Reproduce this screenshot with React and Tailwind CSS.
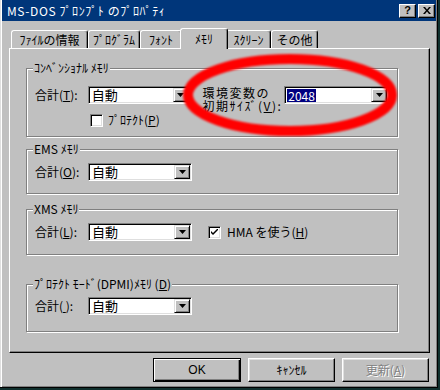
import React from 'react';

function Ul({ children }) {
  return <span className="underline underline-offset-[1px]">{children}</span>;
}

function Arrow() {
  return (
    <svg width="7" height="4" viewBox="0 0 7 4">
      <polygon points="0,0 7,0 3.5,4" fill="#000" />
    </svg>
  );
}

function Combo({ value, selected, w }) {
  return (
    <div className={`${w} h-[18px] flex items-center bg-white border border-t-[#808080] border-l-[#808080] border-r-white border-b-white shadow-[inset_1px_1px_0_#000,inset_-1px_-1px_0_#dfdfdf] pl-[2px] pr-[1px]`}>
      <div className="flex-1 flex items-center">
        {selected ? (
          <span className="bg-[#000080] text-white px-[1px] leading-[13px]">{value}</span>
        ) : (
          <span className="pl-[1px] text-[13px] leading-[14px]">{value}</span>
        )}
      </div>
      <div className="w-[16px] h-[14px] bg-[#c0c0c0] flex items-center justify-center border border-t-[#dfdfdf] border-l-[#dfdfdf] border-r-black border-b-black shadow-[inset_1px_1px_0_#fff,inset_-1px_-1px_0_#808080]">
        <Arrow />
      </div>
    </div>
  );
}

function Check({ checked }) {
  return (
    <div className="w-[13px] h-[13px] bg-white border border-t-[#808080] border-l-[#808080] border-r-white border-b-white shadow-[inset_1px_1px_0_#000,inset_-1px_-1px_0_#dfdfdf] flex items-center justify-center">
      {checked && (
        <svg width="7" height="7" viewBox="0 0 7 7">
          <path d="M0 2 L0 4 L2 6 L7 1 L7 -1 L2 4 Z" fill="#000" />
        </svg>
      )}
    </div>
  );
}

function Group({ label, h, mt, children }) {
  return (
    <div className={`w-[372px] ${h} ${mt} flex flex-col border border-[#808080] shadow-[inset_1px_1px_0_#fff,1px_1px_0_#fff] px-[8px]`}>
      <span className="self-start -mt-[8px] -ml-[2px] px-[1px] bg-[#c0c0c0] leading-[14px]">{label}</span>
      {children}
    </div>
  );
}

function Tab({ w, children }) {
  return (
    <div className={`${w} h-[18px] flex items-center justify-center bg-[#c0c0c0] border-t border-l border-r border-t-white border-l-white border-r-black rounded-t-[3px] shadow-[inset_-1px_0_0_#808080]`}>
      {children}
    </div>
  );
}

export default function App() {
  return (
    <div className="relative w-[440px] h-[390px] bg-[#10302e] overflow-hidden text-black text-[12px] leading-[14px] font-['Noto_Sans_CJK_JP',sans-serif]">
      <div className="w-[438px] h-[388px] bg-[#c0c0c0] flex flex-col border-r border-b border-black shadow-[inset_1px_0_0_#dfdfdf,inset_2px_0_0_#fff,inset_-1px_-1px_0_#808080]">
        {/* title bar */}
        <div className="ml-[2px] mr-[1px] h-[21px] bg-[#00367a] flex items-center pl-[5px] pr-[1px]">
          <span className="flex-1 text-white text-[12px] tracking-[0.6px]">MS-DOS ﾌﾟﾛﾝﾌﾟﾄ のﾌﾟﾛﾊﾟﾃｨ</span>
          <div className="flex gap-[2px]">
            <div className="w-[17px] h-[14px] bg-[#c0c0c0] flex items-center justify-center border border-t-white border-l-white border-r-black border-b-black shadow-[inset_-1px_-1px_0_#808080] font-['Liberation_Sans',sans-serif] font-bold text-[11px] leading-[11px]">?</div>
            <div className="w-[17px] h-[14px] bg-[#c0c0c0] flex items-center justify-center border border-t-white border-l-white border-r-black border-b-black shadow-[inset_-1px_-1px_0_#808080]">
              <svg width="8" height="7" viewBox="0 0 8 7">
                <path d="M0 0 L2 0 L4 2.5 L6 0 L8 0 L5 3.5 L8 7 L6 7 L4 4.5 L2 7 L0 7 L3 3.5 Z" fill="#000" />
              </svg>
            </div>
          </div>
        </div>

        {/* tabs */}
        <div className="mt-[7px] ml-[11px] h-[20px] flex items-end">
          <Tab w="w-[77px]">ﾌｧｲﾙの情報</Tab>
          <Tab w="w-[52px]">ﾌﾟﾛｸﾞﾗﾑ</Tab>
          <Tab w="w-[42px]">ﾌｫﾝﾄ</Tab>
          <div className="relative z-10 w-[48px] -mx-[2px] h-[21px] -mb-[1px] flex items-start justify-center pt-[3px] bg-[#c0c0c0] border-t border-l border-r border-t-white border-l-white border-r-black rounded-t-[3px] shadow-[inset_-1px_0_0_#808080]">
            ﾒﾓﾘ
          </div>
          <Tab w="w-[45px]">ｽｸﾘｰﾝ</Tab>
          <Tab w="w-[47px]">その他</Tab>
        </div>

        {/* panel */}
        <div className="ml-[9px] w-[421px] h-[305px] flex flex-col pl-[16px] border border-t-white border-l-white border-r-black border-b-black shadow-[inset_-1px_-1px_0_#808080]">
          <Group label="ｺﾝﾍﾞﾝｼｮﾅﾙ ﾒﾓﾘ" h="h-[69px]" mt="mt-[19px]">
            <div className="mt-[11px] flex items-start">
              <span className="w-[53px] mt-[2px]">合計(<Ul>T</Ul>):</span>
              <Combo value="自動" w="w-[103px]" />
              <span className="ml-[12px] w-[82px] leading-[13px] tracking-[1.5px]">
                環境変数の
                <br />
                初期ｻｲｽﾞ(<Ul>V</Ul>):
              </span>
              <Combo value="2048" selected w="w-[105px]" />
            </div>
            <div className="mt-[1px] ml-[55px] flex items-center gap-[5px]">
              <Check />
              <span>ﾌﾟﾛﾃｸﾄ(<Ul>P</Ul>)</span>
            </div>
          </Group>

          <Group label="EMS ﾒﾓﾘ" h="h-[45px]" mt="mt-[12px]">
            <div className="mt-[7px] flex items-center">
              <span className="w-[53px]">合計(<Ul>O</Ul>):</span>
              <Combo value="自動" w="w-[104px]" />
            </div>
          </Group>

          <Group label="XMS ﾒﾓﾘ" h="h-[46px]" mt="mt-[15px]">
            <div className="mt-[7px] flex items-center">
              <span className="w-[53px]">合計(<Ul>L</Ul>):</span>
              <Combo value="自動" w="w-[104px]" />
              <div className="ml-[16px] flex items-center gap-[6px]">
                <Check checked />
                <span>HMA を使う(<Ul>H</Ul>)</span>
              </div>
            </div>
          </Group>

          <Group label={<>ﾌﾟﾛﾃｸﾄ ﾓｰﾄﾞ(DPMI)ﾒﾓﾘ (<Ul>D</Ul>)</>} h="h-[48px]" mt="mt-[29px]">
            <div className="mt-[6px] flex items-center">
              <span className="w-[53px]">合計(<Ul>&nbsp;</Ul>):</span>
              <Combo value="自動" w="w-[104px]" />
            </div>
          </Group>
        </div>

        {/* buttons */}
        <div className="mt-[5px] ml-[153px] flex gap-[7px]">
          <button className="w-[88px] h-[24px] flex items-center justify-center bg-[#c0c0c0] border border-black shadow-[inset_1px_1px_0_#fff,inset_-1px_-1px_0_#000,inset_-2px_-2px_0_#808080] font-['Liberation_Sans','Noto_Sans_CJK_JP',sans-serif]">
            OK
          </button>
          <button className="w-[87px] h-[24px] flex items-center justify-center bg-[#c0c0c0] border border-t-white border-l-white border-r-black border-b-black shadow-[inset_-1px_-1px_0_#808080,inset_1px_1px_0_#dfdfdf]">
            ｷｬﾝｾﾙ
          </button>
          <button className="w-[87px] h-[24px] flex items-center justify-center bg-[#c0c0c0] border border-t-white border-l-white border-r-black border-b-black shadow-[inset_-1px_-1px_0_#808080,inset_1px_1px_0_#dfdfdf] text-[#808080] [text-shadow:1px_1px_0_#fff]">
            更新(<Ul>A</Ul>)
          </button>
        </div>
      </div>

      {/* red marker ellipse drawn over the screenshot */}
      <svg className="absolute left-0 top-0 pointer-events-none" width="440" height="390">
        <defs>
          <filter id="soft" x="-10%" y="-20%" width="120%" height="140%">
            <feGaussianBlur stdDeviation="1.3" />
          </filter>
        </defs>
        <ellipse cx="290" cy="95" rx="102" ry="36" fill="none" stroke="#ff0000" strokeWidth="10" filter="url(#soft)" />
      </svg>
    </div>
  );
}
